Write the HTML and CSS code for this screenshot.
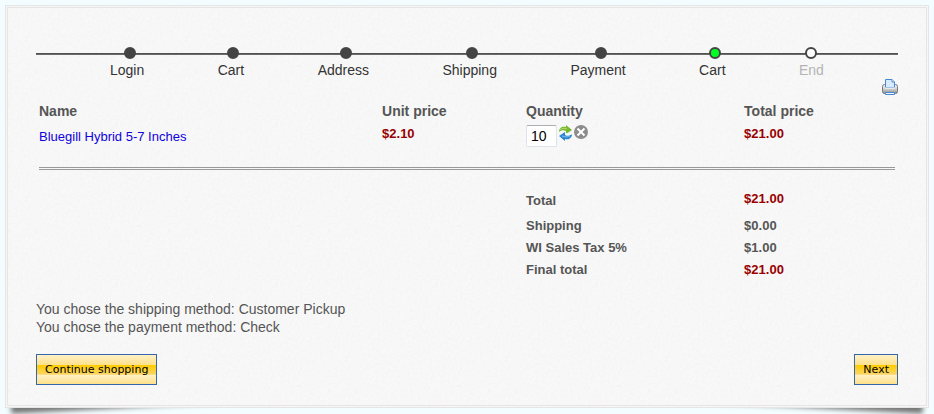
FILE: index.html
```
<!DOCTYPE html>
<html lang="en">
<head>
  <meta charset="UTF-8">
  <meta name="viewport" content="width=device-width, initial-scale=1.0">
  <title>Checkout</title>
  <link rel="stylesheet" href="styles.css">
</head>
<body>
  <main class="page">
    <form class="checkout">
      <ol class="steps">
        <li class="step"><span class="dot"></span><span class="step-name">Login</span></li>
        <li class="step"><span class="dot"></span><span class="step-name">Cart</span></li>
        <li class="step"><span class="dot"></span><span class="step-name">Address</span></li>
        <li class="step"><span class="dot"></span><span class="step-name">Shipping</span></li>
        <li class="step"><span class="dot"></span><span class="step-name">Payment</span></li>
        <li class="step current"><span class="dot"></span><span class="step-name">Cart</span></li>
        <li class="step end"><span class="dot"></span><span class="step-name">End</span></li>
      </ol>

      <div class="print-row">
        <a href="#print" class="print" aria-label="Print">
          <svg width="16" height="16" viewBox="0 0 16 16">
            <defs>
              <linearGradient id="body" x1="0" y1="0" x2="0" y2="1">
                <stop offset="0" stop-color="#fafafa"/>
                <stop offset="0.6" stop-color="#c4c4c4"/>
                <stop offset="1" stop-color="#888"/>
              </linearGradient>
            </defs>
            <rect x="0.5" y="5.500" width="15" height="9" rx="2" fill="url(#body)" stroke="#7a7a7a"/>
            <path d="M3.500 8.500V0.500h6.500l2.500 2.500v5.500z" fill="#d8eaff" stroke="#4788d0"/>
            <path d="M10 0.500V3h2.500" fill="#fff" stroke="#4788d0"/>
            <path d="M3 9h10" stroke="#fff"/>
            <path d="M3.500 13.500h9v2h-9z" fill="#eef6ff" stroke="#4788d0"/>
          </svg>
        </a>
      </div>

      <table class="cart">
        <thead>
          <tr>
            <th class="col-name">Name</th>
            <th class="col-unit">Unit price</th>
            <th class="col-quantity">Quantity</th>
            <th class="col-total">Total price</th>
          </tr>
        </thead>
        <tbody>
          <tr class="product">
            <td><a href="#product" class="product-link">Bluegill Hybrid 5-7 Inches</a></td>
            <td class="price">$2.10</td>
            <td>
              <div class="quantity">
                <input type="text" class="quantity-field" value="10" aria-label="Quantity">
                <button type="button" class="icon-btn" aria-label="Refresh">
                  <svg width="15" height="16" viewBox="0 0 15 16">
                    <path d="M1 7C1 3 4 1 8 2V0L14 5L8 9V6C5 5 3 5.500 1 7z" fill="#79b72f"/>
                    <path d="M2 5C4 3 6 3 9 4" fill="none" stroke="#b4dc72"/>
                    <path d="M14 9C14 13 11 15 7 14V16L1 11L7 7V10C10 11 12 10.500 14 9z" fill="#2c83cf"/>
                    <path d="M4 11C7 12 10 12.500 12 11" fill="none" stroke="#79c4f3"/>
                    <path d="M1 7C3 5.500 5 5 8 6V8H7V10C10 11 12 10.500 14 9L8 8L7 7z" fill="#f4f8fa"/>
                  </svg>
                </button>
                <button type="button" class="icon-btn" aria-label="Delete">
                  <svg width="14" height="14" viewBox="0 0 14 14">
                    <circle cx="7" cy="7" r="7" fill="#8c8c8c"/>
                    <path d="M3.500 3.500l7 7M10.500 3.500l-7 7" stroke="#fff" stroke-width="2"/>
                  </svg>
                </button>
              </div>
            </td>
            <td class="price">$21.00</td>
          </tr>
          <tr class="separator">
            <td colspan="4"><hr></td>
          </tr>
          <tr class="subtotal">
            <td colspan="2"></td>
            <td>Total</td>
            <td class="price">$21.00</td>
          </tr>
          <tr class="sum">
            <td colspan="2"></td>
            <td>Shipping</td>
            <td>$0.00</td>
          </tr>
          <tr class="sum">
            <td colspan="2"></td>
            <td>WI Sales Tax 5%</td>
            <td>$1.00</td>
          </tr>
          <tr class="sum">
            <td colspan="2"></td>
            <td>Final total</td>
            <td class="price">$21.00</td>
          </tr>
        </tbody>
      </table>

      <p class="chosen">
        You chose the shipping method: Customer Pickup<br>
        You chose the payment method: Check
      </p>

      <div class="buttons">
        <button type="button" class="btn">Continue shopping</button>
        <button type="submit" class="btn">Next</button>
      </div>
    </form>
  </main>
</body>
</html>
```

FILE: styles.css
```
body {
  margin: 0;
  background: #f3fdff;
  color: #555;
  font-family: Arial, "Liberation Sans", sans-serif;
  font-size: 14px;
  line-height: 18px;
}
.page {
  position: relative;
  z-index: 0;
  padding: 5px 5px 6px;
}
.checkout {
  position: relative;
  border: 3px double #e6e4e4;
  padding: 39px 28px 20px;
  background: #fafafa url("data:image/svg+xml,%3Csvg xmlns='http://www.w3.org/2000/svg' width='160' height='160'%3E%3Cfilter id='n' x='0' y='0' width='1' height='1'%3E%3CfeTurbulence type='fractalNoise' baseFrequency='0.4' numOctaves='2' stitchTiles='stitch'/%3E%3C/filter%3E%3Crect width='160' height='160' filter='url(%23n)' opacity='0.09'/%3E%3C/svg%3E");
}
/* lifted corner shadows */
.page::before,
.page::after {
  content: "";
  position: absolute;
  z-index: -1;
  bottom: 22px;
  left: 10px;
  width: 40%;
  height: 20px;
  box-shadow: 0 12px 5px #777;
  transform: rotate(-3deg);
}
.page::after {
  left: auto;
  right: 10px;
  transform: rotate(3deg);
}

.steps {
  display: flex;
  justify-content: space-between;
  margin: 0;
  padding: 0 74px;
  list-style: none;
  background: linear-gradient(#444, #777) 0 6px / 100% 2px no-repeat;
}
.step {
  display: flex;
  flex-direction: column;
  align-items: center;
  gap: 2px;
  color: #333;
}
.dot {
  box-sizing: border-box;
  width: 12px;
  height: 12px;
  border: 2px solid #444;
  border-radius: 50%;
  background: #444;
}
.step-name {
  margin-right: 5px;
}
.current .dot {
  background: #0f2;
}
.end {
  color: #b4b4b4;
}
.end .dot {
  background: #fff;
}
.end .step-name {
  margin-right: 0;
}

.print-row {
  display: flex;
  justify-content: flex-end;
}
.print svg {
  display: block;
}

.cart {
  width: 100%;
  border-collapse: collapse;
  table-layout: fixed;
  font-size: 13px;
  font-weight: bold;
}
.cart th,
.cart td {
  box-sizing: border-box;
  padding: 0 3px;
  text-align: left;
  vertical-align: top;
}
.cart th {
  padding-top: 7px;
  font-size: 14px;
}
.cart .col-name {
  width: 39.8%;
}
.cart .col-unit {
  width: 16.7%;
}
.cart .col-quantity {
  width: 25.3%;
}
.cart .price {
  color: #900;
}
.cart .product td {
  padding-top: 5px;
}
.product-link {
  color: #10d;
  font-weight: normal;
  line-height: 24px;
  text-decoration: none;
}
.quantity {
  display: flex;
  align-items: flex-start;
  gap: 1px;
}
.quantity-field {
  box-sizing: border-box;
  width: 31px;
  height: 22px;
  padding: 0 4px;
  border: 1px solid #dde3ea;
  border-top-color: #abadb3;
  border-radius: 2px;
  background: #fff;
  color: #000;
  font-family: Arial, "Liberation Sans", sans-serif;
  font-size: 14px;
}
.icon-btn {
  padding: 0;
  border: 0;
  background: none;
  cursor: pointer;
}
.icon-btn svg {
  display: block;
}
hr {
  height: 1px;
  margin: 18px 0 22px;
  border: solid #999;
  border-width: 1px 0;
}
.cart .subtotal td {
  padding-bottom: 7px;
}
.subtotal .price {
  line-height: 14px;
}
.cart .sum td {
  padding-bottom: 4px;
}

.chosen {
  margin: 17px 0 18px;
}
.buttons {
  display: flex;
  justify-content: space-between;
}
.btn {
  height: 31px;
  padding: 0 8px;
  border: 1px solid #36a;
  background: linear-gradient(#fff1c6, #fde08a 35%, #fc0 36%, #fbd568 67%, #fff1c6 68%, #fde08a);
  color: #000;
  font-family: Verdana, "DejaVu Sans", sans-serif;
  font-size: 11px;
  cursor: pointer;
}
```
